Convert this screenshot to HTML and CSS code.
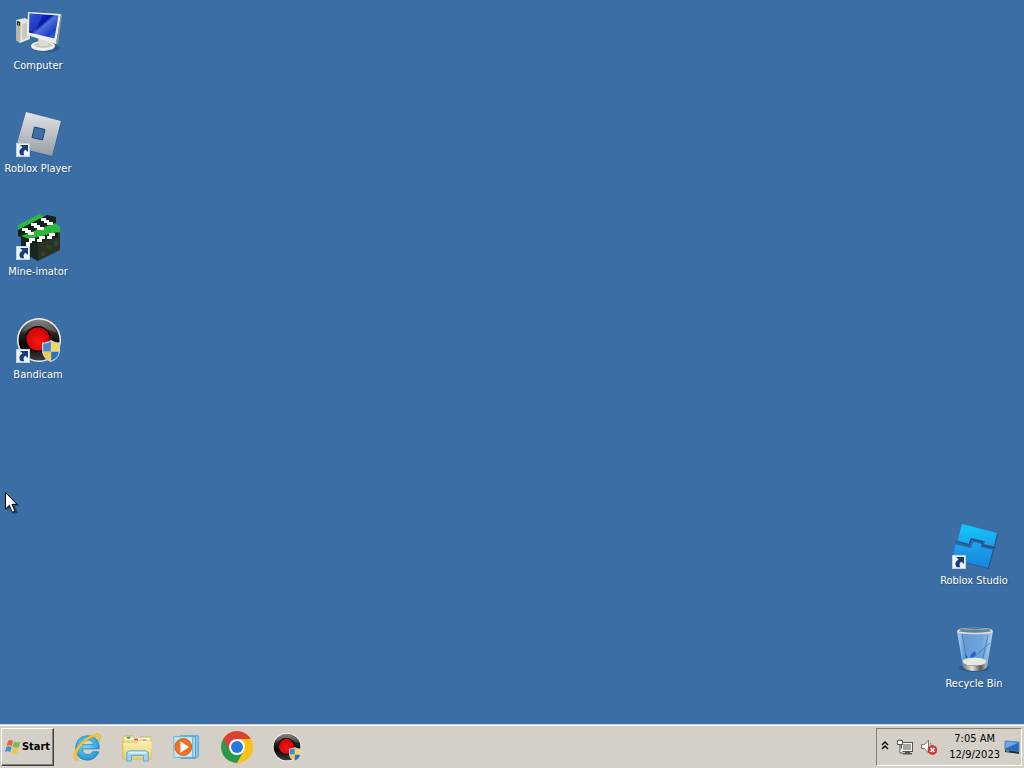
FILE: index.html
```html
<!DOCTYPE html>
<html lang="en">
<head>
<meta charset="utf-8">
<title>Desktop</title>
<link rel="stylesheet" href="styles.css">
</head>
<body>
<svg class="defs" width="0" height="0" aria-hidden="true">
  <defs>
    <linearGradient id="screen" x1="0" y1="0" x2="1" y2="1"><stop offset="0" stop-color="#1740d8"/><stop offset=".42" stop-color="#0718a8"/><stop offset=".5" stop-color="#4f72dc"/><stop offset=".75" stop-color="#1f3fc0"/><stop offset="1" stop-color="#3f78e8"/></linearGradient>
    <linearGradient id="silver" x1="0" y1="0" x2="0" y2="1"><stop offset="0" stop-color="#e2e4e8"/><stop offset="1" stop-color="#979ca5"/></linearGradient>
    <linearGradient id="studio" gradientUnits="userSpaceOnUse" x1="24" y1="0" x2="24" y2="46"><stop offset="0" stop-color="#10ccfc"/><stop offset=".45" stop-color="#1ba4ee"/><stop offset="1" stop-color="#1781dc"/></linearGradient>
    <linearGradient id="dark" x1="0" y1="0" x2="0" y2="1"><stop offset="0" stop-color="#8a8a8a"/><stop offset=".35" stop-color="#262626"/><stop offset=".6" stop-color="#050505"/><stop offset="1" stop-color="#3c3c3c"/></linearGradient>
    <linearGradient id="glass" x1="0" y1="0" x2="1" y2="0"><stop offset="0" stop-color="#b8d7ef"/><stop offset=".2" stop-color="#669bd2"/><stop offset=".7" stop-color="#6fa6da"/><stop offset="1" stop-color="#b5d0e6"/></linearGradient>
    <linearGradient id="metal" x1="0" y1="0" x2="1" y2="0"><stop offset="0" stop-color="#77736c"/><stop offset=".4" stop-color="#e8e4dc"/><stop offset=".75" stop-color="#5c554e"/><stop offset="1" stop-color="#b0aca5"/></linearGradient>
    <linearGradient id="folder" x1="0" y1="0" x2="0" y2="1"><stop offset="0" stop-color="#fdf3b4"/><stop offset="1" stop-color="#eccf6b"/></linearGradient>
    <radialGradient id="ie" cx=".45" cy=".4" r=".6"><stop offset="0" stop-color="#7fdcfa"/><stop offset="1" stop-color="#2394d4"/></radialGradient>
    <radialGradient id="red" cx=".5" cy=".6" r=".55"><stop offset="0" stop-color="#ff1414"/><stop offset="1" stop-color="#c90808"/></radialGradient>
    <symbol id="shortcut" viewBox="0 0 14 14">
      <rect x=".5" y=".5" width="13" height="13" fill="#eef5fc" stroke="#c3d3e4"/>
      <path d="M4 2h8v7L9.600 6.800C7.600 7.600 7 9.500 8.200 12.200H4.800C2.400 9 3.200 6.200 6.600 4.400z" fill="#173c7c"/>
    </symbol>
    <symbol id="shield" viewBox="0 0 18 22">
      <path d="M9 0c3 2 6 2.500 9 2.500v8C18 16 14 20 9 22 4 20 0 16 0 10.500v-8C3 2.500 6 2 9 0z" fill="#cfd6de"/>
      <path d="M8.800 1.500C6 3.200 4 3.700 1.200 3.700V11.500h7.600z" fill="#4488cc"/>
      <path d="M9.200 1.500c2.800 1.700 4.800 2.200 7.600 2.200v7.800H9.200z" fill="#f7d557"/>
      <path d="M1.200 11.800h7.600v8.800C4.500 19 1.500 16 1.200 11.800z" fill="#f3c94a"/>
      <path d="M9.200 11.800h7.600c-.3 4.200-3.300 7.200-7.600 8.800z" fill="#2c70bd"/>
    </symbol>
    <symbol id="bandicam" viewBox="0 0 48 48">
      <circle cx="25" cy="23" r="22" fill="#f4eee8"/>
      <circle cx="25" cy="23" r="20.500" fill="url(#dark)"/>
      <path d="M8 15C14 2 36 1 43 16 32 10 18 9 8 15z" fill="#777" opacity=".5"/>
      <circle cx="24" cy="22" r="13" fill="#160202"/>
      <circle cx="24" cy="22" r="11.500" fill="url(#red)"/>
      <use href="#shield" x="28" y="23" width="18" height="22"/>
    </symbol>
  </defs>
</svg>

<main class="desktop">
  <div class="column">
    <a class="shortcut" href="#computer">
      <svg class="icon" viewBox="0 0 48 48" aria-hidden="true">
        <ellipse cx="33" cy="40" rx="13" ry="4" fill="#1d3f68" opacity=".45"/>
        <path d="M2 12l9-2 5 3v18L6 35l-4-3z" fill="#e9e7dc"/>
        <path d="M2 12l5 2-1 21-4-3z" fill="#b5b5a9"/>
        <path d="M3 13l3 1v4l-3-1z" fill="#242b2b"/><path d="M4 15h1v2H4z" fill="#43bf65"/>
        <path d="M8 16l5-1v15l-5 2z" fill="#c9c9be"/>
        <ellipse cx="29" cy="38" rx="12" ry="5" fill="#f2f1e9"/>
        <ellipse cx="29" cy="37" rx="9" ry="3" fill="#c9c9c0"/>
        <path d="M24 29l10 3v6h-9z" fill="#dddcd3"/>
        <path d="M14 4l33 2-5 30-29-9z" fill="#f0eee4"/>
        <path d="M47 6l1 1-4 29-2 0z" fill="#94948d"/>
        <path d="M15.500 5.500l29 2-4 23-25.500-6z" fill="url(#screen)"/>
        <path d="M16 6l13 1-8 17-6-1z" fill="#8fa9ff" opacity=".2"/>
      </svg>
      <span class="label">Computer</span>
    </a>
    <a class="shortcut" href="#roblox-player">
      <svg class="icon" viewBox="0 0 48 48" aria-hidden="true">
        <path fill-rule="evenodd" d="M12 1l36 9-10 36L2 36zM20 16l-2 11 11 2 2-11z" fill="#354c6e" opacity=".6"/>
        <path fill-rule="evenodd" d="M12 1l35 9-9 35L2 36zM20.500 16l-2.500 10.500 10.500 2.500 2.500-10.500z" fill="url(#silver)"/>
        <path d="M20.500 16l10.500 2.500-2.500 10.500L18 26.500z" fill="none" stroke="#24466e"/>
        <use href="#shortcut" x="2" y="32" width="14" height="14"/>
      </svg>
      <span class="label">Roblox Player</span>
    </a>
    <a class="shortcut" href="#mine-imator">
      <svg class="icon" viewBox="0 0 48 48" aria-hidden="true">
        <path d="M4 11L25 0l8 3L8 16l-4 1z" fill="#2fb544"/>
        <path d="M4 16L33 1l9 2v7L9 24l-5-2z" fill="#14201a"/>
        <path d="M7 22l34-13 5 4v6L24 28 7 26z" fill="#2bb83a"/>
        <path d="M7 22l17 6v19L7 38z" fill="#17261f"/>
        <path d="M24 27l22-9v18L24 47z" fill="#2b3327"/>
        <path d="M12 26L44 18v5L24 29H12z" fill="#14201a"/>
        <path d="M33 31h4v4h-4zM40 27h4v5h-4zM27 38h4v4h-4z" fill="#37432f"/>
        <path d="M8 14h6v2h3v2h3v3h-6v-2h-3v-2H8zM17 9h6v2h3v2h4v3h-7v-2h-3v-2h-3zM27 4h5v2h3v2h4v3h-6V9h-3V7h-3z" fill="#fff"/>
        <path d="M15 24h6v3h-3v2h-2v3h-4v-4h3zM25 22h6v3h-3v3h-5v-3h2zM35 19h6v3h-3v3h-5v-3h2z" fill="#fff"/>
        <use href="#shortcut" x="2" y="32" width="14" height="14"/>
      </svg>
      <span class="label">Mine-imator</span>
    </a>
    <a class="shortcut" href="#bandicam">
      <svg class="icon" viewBox="0 0 48 48" aria-hidden="true">
        <use href="#bandicam" width="48" height="48"/>
        <use href="#shortcut" x="2" y="32" width="14" height="14"/>
      </svg>
      <span class="label">Bandicam</span>
    </a>
  </div>

  <div class="column column-end">
    <a class="shortcut" href="#roblox-studio">
      <svg class="icon" viewBox="0 0 48 48" aria-hidden="true">
        <path d="M13 2l35 9-3 13-1 3-5 19L3 37l3-14 1-3z" fill="#1d3f74" opacity=".6"/>
        <path d="M12 1l35 9-3 13-1 3-5 19L2 36l3-13 2-3z" fill="url(#studio)"/>
        <path d="M5 21l16 4 2-6 9 2-1 3 14 3.500v-4l-11-2.500 1-3L21 15l-2 6L6 18z" fill="#2e659f"/>
        <path d="M6 18l13 3.500L21 16l12 3-1 3 13 3" fill="none" stroke="#1c4a80"/>
        <use href="#shortcut" x="2" y="32" width="14" height="14"/>
      </svg>
      <span class="label">Roblox Studio</span>
    </a>
    <a class="shortcut" href="#recycle-bin">
      <svg class="icon" viewBox="0 0 48 48" aria-hidden="true">
        <ellipse cx="24" cy="42" rx="15" ry="4" fill="#1f4470" opacity=".5"/>
        <path d="M7 5h36l-6 36c-4 5-20 5-24 0z" fill="url(#glass)"/>
        <path d="M12 8l5 27M38 9l-6 27M24 31l16-14" stroke="#4381bf" stroke-width="1" fill="none"/>
        <path d="M21 28l4-3 1 3-2 3-4 1zM15 28l3 3-2 2z" fill="#2463ca"/>
        <path d="M13 34c6-3 17-3 23 0l-1 5H14z" fill="#e7e8de"/>
        <path d="M13 37c7 4 16 4 23 0l-1 5c-5 4-16 4-21 0z" fill="url(#metal)"/>
        <ellipse cx="25" cy="5" rx="17" ry="2.500" fill="#5583ad" stroke="#dedfda" stroke-width="1.500"/>
        <path d="M10 4c8-2 22-2 30 0" stroke="#68727b" fill="none"/>
      </svg>
      <span class="label">Recycle Bin</span>
    </a>
  </div>

  <svg class="cursor" viewBox="0 0 15 23" aria-hidden="true">
    <path d="M2 2v17l4-4 3 7 4-1-3-7h5z" fill="#0b2442" opacity=".5"/>
    <path d="M.5.500v16.500l3.800-3.700 3 7 2.700-1.200-3-6.800h5z" fill="#fff" stroke="#000"/>
  </svg>
</main>

<footer class="taskbar">
  <button class="start" type="button">
    <svg class="flag" viewBox="0 0 16 16" aria-hidden="true">
      <path d="M3 2c2-1.500 3.500-1 5 0L6.800 7.200C5 6 3.500 6 1.600 7z" fill="#e8643a"/>
      <path d="M9 2.500c2 1.200 4 1.200 6.300.2L14 8c-2 1-4 1-6.200-.3z" fill="#7cb94a"/>
      <path d="M1.400 8c2-1 3.500-1 5.200.2L5.300 13C3.500 11.800 2 12 0 13z" fill="#3f93d2"/>
      <path d="M7.600 8.700c2 1.200 4 1.200 6.200.3L12.500 14c-2 1-4 1-6.200-.3z" fill="#f5c63a"/>
    </svg>
    <span>Start</span>
  </button>

  <nav class="quick" aria-label="Pinned programs">
    <button class="pin" type="button" aria-label="Internet Explorer">
      <svg class="pin-icon" viewBox="0 0 32 32" aria-hidden="true">
        <path fill-rule="evenodd" d="M29 18H11c.5 4 2.500 6 6 6 2.500 0 4-1 5-3h6.500c-1.500 5-6 9-12 9C9 30 4 25 4 17S9.500 4 17 4s12.500 5 12 14zM11.300 13.500H23c-.5-3-2.500-5-5.700-5-3.300 0-5.500 2-6 5z" fill="url(#ie)" stroke="#1b7fbd" stroke-width=".8"/>
        <path d="M4 30C-1 27 3 18 9 12 17 4 27-1 30 3c1.500 2 0 5-1 7 0-3-1-5-4-5C17 5 6 17 5 25c-.3 2 .5 4 2 5z" fill="#f6c62e" stroke="#dea51c" stroke-width=".4"/>
      </svg>
    </button>
    <button class="pin" type="button" aria-label="Windows Explorer">
      <svg class="pin-icon" viewBox="0 0 32 32" aria-hidden="true">
        <path d="M1 6l3-2h8v3h8V5h10v4h2v19H1z" fill="#f1dc83" stroke="#cfae48" stroke-width=".7"/>
        <path d="M3 5h10v4H3zM11 6h10v4H11zM20 6h10v5H20z" fill="#fffbe6" stroke="#dbc781" stroke-width=".5"/>
        <path d="M5 5h4v2H5z" fill="#36a44c"/><path d="M13 7h4v2h-4z" fill="#d44a34"/><path d="M22 8h4v2h-4z" fill="#398acb"/>
        <path d="M1 11h15l2-2h14v20H1z" fill="url(#folder)" stroke="#d3b04a" stroke-width=".6"/>
        <path d="M5 31V22l3-2h17l3 2v9h-5v-6H10v6z" fill="#9bd5f5" stroke="#5aa8d8"/>
        <path d="M7 22h19" stroke="#e0f5ff" stroke-width="2"/>
      </svg>
    </button>
    <button class="pin" type="button" aria-label="Windows Media Player">
      <svg class="pin-icon" viewBox="0 0 32 32" aria-hidden="true">
        <path d="M9 4h19v22l-3 2H9z" fill="#8dcdee" stroke="#4a9ccd"/>
        <path d="M6 5h19v22H6z" fill="#a8dcf5" stroke="#4a9ccd"/>
        <path d="M2 5h20v22H2z" fill="#c9e9f7" stroke="#65afd8"/>
        <circle cx="12" cy="16" r="9" fill="#ef7421" stroke="#d75b16"/>
        <path d="M9 10l9 6-9 6z" fill="#fff"/>
      </svg>
    </button>
    <button class="pin" type="button" aria-label="Google Chrome">
      <svg class="pin-icon chrome" viewBox="0 0 32 32" aria-hidden="true">
        <circle cx="16" cy="16" r="16" fill="#fbc116"/>
        <path d="M16 16L2.200 8A16 16 0 0 1 29.800 8z" fill="#dc3f33"/>
        <path d="M2.200 8A16 16 0 0 0 16 32l7-12-7-4z" fill="#279a4c"/>
        <path d="M16 8h13.800A16 16 0 0 1 16 32l7-12z" fill="#fbc116"/>
        <path d="M2.200 8l7 12L16 8z" fill="#dc3f33"/>
        <circle cx="16" cy="16" r="8" fill="#fff"/><circle cx="16" cy="16" r="6" fill="#2879dc"/>
      </svg>
    </button>
    <button class="pin" type="button" aria-label="Bandicam">
      <svg class="pin-icon" viewBox="2 0 46 46" aria-hidden="true"><use href="#bandicam" width="48" height="48"/></svg>
    </button>
  </nav>

  <div class="tray">
    <button class="tray-button" type="button" aria-label="Show hidden icons">
      <svg width="8" height="14" viewBox="0 0 8 14" aria-hidden="true"><path d="M1 5l3-3 3 3M1 9l3-3 3 3" fill="none" stroke="#000" stroke-width="1.500"/></svg>
    </button>
    <button class="tray-button" type="button" aria-label="Network">
      <svg width="16" height="16" viewBox="0 0 16 16" aria-hidden="true">
        <rect x="4.500" y="3.500" width="11" height="9" fill="#f6f6f2" stroke="#555"/><path d="M6 5h8v6H6z" fill="#a4a6a4"/>
        <path d="M8 13h5v1h2v1.500H6V14h2z" fill="#555"/>
        <path d="M.5 1.500h5v4h-5zM2 .5v1M4 .5v1M3 6v8h3" fill="#fff" stroke="#555"/>
      </svg>
    </button>
    <button class="tray-button" type="button" aria-label="Volume, muted">
      <svg width="16" height="16" viewBox="0 0 16 16" aria-hidden="true">
        <path d="M.5 5.500h3l4-4.500v13l-4-4.500h-3z" fill="#fafaf7" stroke="#777"/>
        <path d="M9.500 4q2 3 0 7" fill="none" stroke="#888"/>
        <circle cx="11.500" cy="11" r="4.500" fill="#d93636" stroke="#b51f25" stroke-width=".5"/>
        <path d="M9.500 9l4 4m0-4l-4 4" stroke="#fff" stroke-width="1.500"/>
      </svg>
    </button>
    <button class="clock" type="button"><time datetime="2023-12-09T07:05">7:05 AM<br>12/9/2023</time></button>
    <button class="tray-button" type="button" aria-label="Show desktop">
      <svg width="16" height="16" viewBox="0 0 16 16" aria-hidden="true">
        <path d="M1 2l14 1v10L1 11z" fill="#2b69bd" stroke="#5883b5"/><path d="M1.500 2.500l13 1-13 6z" fill="#6aa8e8"/><path d="M1 11l14 2v2L1 13z" fill="#182c46"/><path d="M2 11.500h3v1H2z" fill="#8fd070"/>
      </svg>
    </button>
  </div>
</footer>
</body>
</html>
```
FILE: styles.css
```css
* { box-sizing: border-box; }

body {
  margin: 0;
  min-height: 100vh;
  display: flex;
  flex-direction: column;
  background: #3a6ea5;
  color: #000;
  font: 11px/16px "DejaVu Sans Condensed", "DejaVu Sans", sans-serif;
  font-stretch: condensed;
}

button {
  margin: 0;
  padding: 0;
  border: 0;
  background: none;
  color: inherit;
  font: inherit;
}

svg { display: block; flex: none; }

.defs { position: absolute; }

.desktop {
  position: relative;
  flex: 1;
  display: flex;
  justify-content: space-between;
  padding: 8px 12px 32px 0;
}

.column {
  display: flex;
  flex-direction: column;
  gap: 37px;
}

.column-end { justify-content: flex-end; }

.shortcut {
  width: 76px;
  display: flex;
  flex-direction: column;
  align-items: center;
  gap: 2px;
  color: #fff;
  text-decoration: none;
}

.icon {
  width: 48px;
  height: 48px;
  overflow: visible;
}

.label {
  white-space: nowrap;
  text-shadow: 1px 1px 1px #2b527c;
}

.cursor {
  position: absolute;
  left: 5px;
  top: 492px;
  width: 15px;
  height: 23px;
}

.taskbar {
  height: 44px;
  display: flex;
  align-items: stretch;
  padding: 3px 2px 2px 1px;
  background: #d4d0c8;
  border-top: 1px solid #d4d0c8;
  box-shadow: inset 0 1px #fff;
}

.start {
  width: 53px;
  display: flex;
  align-items: center;
  justify-content: center;
  gap: 1px;
  border: 1px solid;
  border-color: #fff #404040 #404040 #fff;
  box-shadow: inset -1px -1px #808080;
  font-weight: bold;
}

.flag {
  width: 16px;
  height: 16px;
}

.quick {
  display: flex;
  margin-left: 8px;
}

.pin {
  width: 50px;
  display: flex;
  align-items: center;
  justify-content: center;
}

.pin-icon {
  width: 30px;
  height: 30px;
}

.chrome {
  width: 32px;
  height: 32px;
}

.tray {
  margin-left: auto;
  display: flex;
  align-items: center;
  gap: 8px;
  padding: 0 1px 0 4px;
  border: 1px solid;
  border-color: #808080 #fff #fff #808080;
}

.clock {
  margin-left: 4px;
  margin-right: -4px;
  text-align: center;
}
```
